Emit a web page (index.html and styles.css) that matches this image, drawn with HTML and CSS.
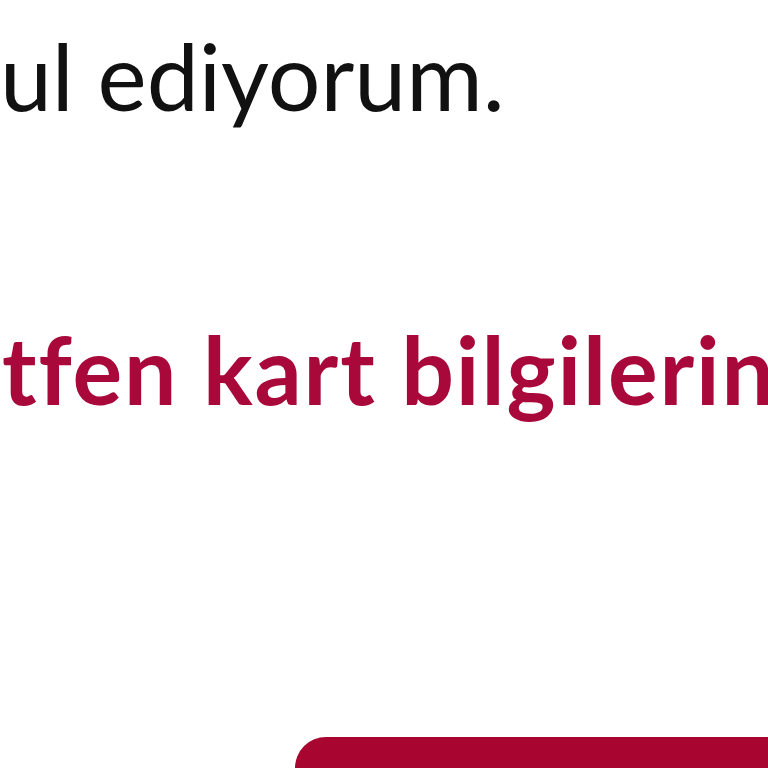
FILE: index.html
```html
<!DOCTYPE html>
<html lang="tr">
<head>
<meta charset="utf-8">
<link rel="stylesheet" href="styles.css">
</head>
<body>
<div class="page">
  <p class="consent">ul ediyorum.</p>
  <p class="notice">tfen kart bilgilerin</p>
  <div class="action"><div class="button"></div></div>
</div>
</body>
</html>
```
FILE: styles.css
```css
html, body {
  margin: 0;
  padding: 0;
  background: #ffffff;
  width: 768px;
  height: 768px;
  overflow: hidden;
}
.page {
  width: 768px;
  height: 768px;
  overflow: hidden;
  display: flex;
  flex-direction: column;
  font-family: "Lato", "Noto Sans", sans-serif;
  font-variant-ligatures: none;
}
.consent {
  margin: 0;
  padding: 20px 0 0 0;
  font-size: 93px;
  line-height: 110px;
  font-weight: 400;
  color: #111111;
  white-space: nowrap;
}
.notice {
  margin: 0;
  padding: 184px 0 0 2px;
  font-size: 93px;
  line-height: 110px;
  font-weight: 700;
  letter-spacing: 1.9px;
  color: #a8093a;
  white-space: nowrap;
}
.action {
  flex: 1;
  display: flex;
  align-items: flex-end;
  padding-left: 295px;
}
.button {
  width: 600px;
  height: 31px;
  background: #a80530;
  border-radius: 70px 0 0 0;
}
```
